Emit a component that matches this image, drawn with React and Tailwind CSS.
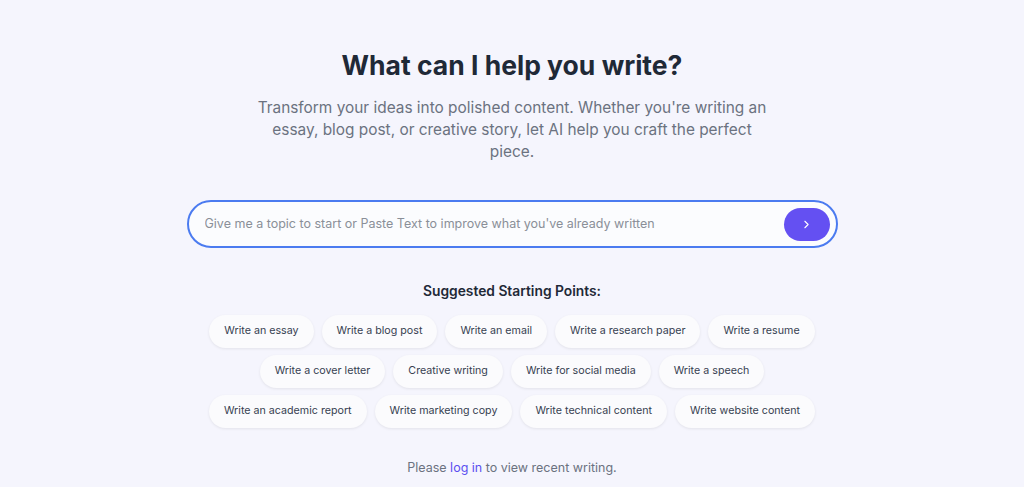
import { ChevronRight } from 'lucide-react';

const suggestions = [
  ['Write an essay', 'Write a blog post', 'Write an email', 'Write a research paper', 'Write a resume'],
  ['Write a cover letter', 'Creative writing', 'Write for social media', 'Write a speech'],
  ['Write an academic report', 'Write marketing copy', 'Write technical content', 'Write website content'],
];

const App = () => {
  return (
    <div
      className="min-h-screen bg-[#f5f5fd] flex flex-col items-center pt-[47px]"
      style={{ fontFamily: 'Inter, "Noto Sans", sans-serif' }}
    >
      <h1 className="text-[26.5px] leading-9 font-bold text-[#1f2937]">What can I help you write?</h1>
      <p className="mt-[14px] max-w-[512px] text-center text-[15.4px] leading-[22px] text-[#6b7280]">
        Transform your ideas into polished content. Whether you're writing an essay, blog post, or creative story, let AI help you craft the perfect piece.
      </p>

      {/* Prompt box */}
      <div className="mt-[37px] w-[651px] h-12 flex items-center rounded-full border-2 border-[#4b7bf0] bg-[#fbfcfe] pl-4 pr-[6px]">
        <input
          type="text"
          autoFocus
          placeholder="Give me a topic to start or Paste Text to improve what you've already written"
          className="flex-1 bg-transparent text-[12.5px] text-gray-700 placeholder:text-[#8a8f98] caret-gray-700 outline-none"
        />
        <button className="w-[46px] h-[33px] rounded-full bg-[#6450f2] flex items-center justify-center text-white">
          <ChevronRight size={13} strokeWidth={2} />
        </button>
      </div>

      <h2 className="mt-[33px] text-[13.8px] font-semibold text-[#1f2937]">Suggested Starting Points:</h2>

      <div className="mt-[13px] flex flex-col items-center gap-[7px]">
        {suggestions.map((row, i) => (
          <div key={i} className="flex gap-2">
            {row.map((s) => (
              <button
                key={s}
                className="h-[33px] px-[15px] rounded-full bg-[#fbfbfd] text-[10.7px] text-[#374151] shadow-[0_1px_3px_rgba(0,0,0,0.08)]"
              >
                {s}
              </button>
            ))}
          </div>
        ))}
      </div>

      <p className="mt-[31px] text-[12.5px] text-[#6b7280]">
        Please <a href="#" className="text-[#5b4ff0]">log in</a> to view recent writing.
      </p>
    </div>
  );
};

export default App;
